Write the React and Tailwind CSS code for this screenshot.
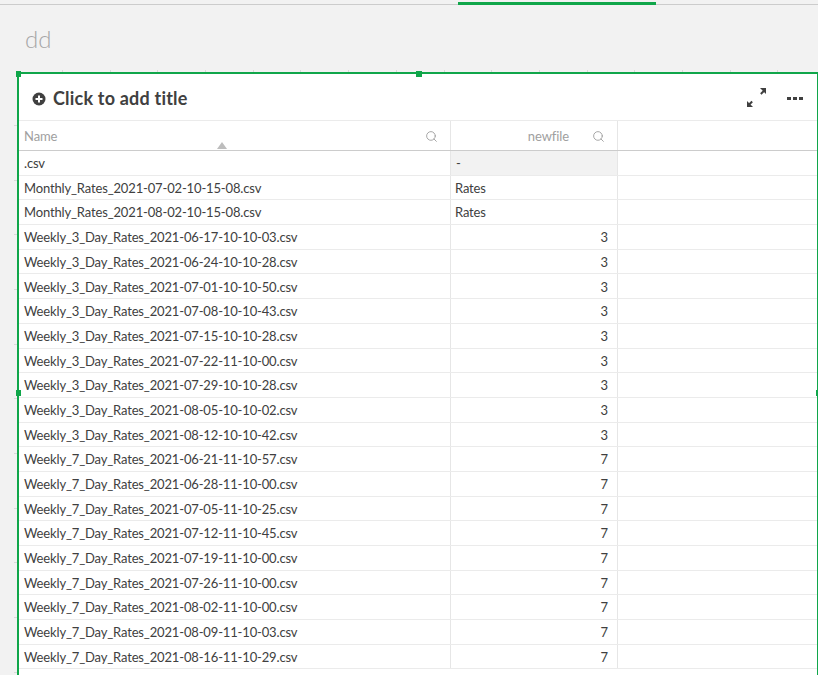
import React from 'react';
import { Search } from 'lucide-react';

const rows = [
  ['.csv', '-', 'dash'],
  ['Monthly_Rates_2021-07-02-10-15-08.csv', 'Rates', 'text'],
  ['Monthly_Rates_2021-08-02-10-15-08.csv', 'Rates', 'text'],
  ['Weekly_3_Day_Rates_2021-06-17-10-10-03.csv', '3', 'num'],
  ['Weekly_3_Day_Rates_2021-06-24-10-10-28.csv', '3', 'num'],
  ['Weekly_3_Day_Rates_2021-07-01-10-10-50.csv', '3', 'num'],
  ['Weekly_3_Day_Rates_2021-07-08-10-10-43.csv', '3', 'num'],
  ['Weekly_3_Day_Rates_2021-07-15-10-10-28.csv', '3', 'num'],
  ['Weekly_3_Day_Rates_2021-07-22-11-10-00.csv', '3', 'num'],
  ['Weekly_3_Day_Rates_2021-07-29-10-10-28.csv', '3', 'num'],
  ['Weekly_3_Day_Rates_2021-08-05-10-10-02.csv', '3', 'num'],
  ['Weekly_3_Day_Rates_2021-08-12-10-10-42.csv', '3', 'num'],
  ['Weekly_7_Day_Rates_2021-06-21-11-10-57.csv', '7', 'num'],
  ['Weekly_7_Day_Rates_2021-06-28-11-10-00.csv', '7', 'num'],
  ['Weekly_7_Day_Rates_2021-07-05-11-10-25.csv', '7', 'num'],
  ['Weekly_7_Day_Rates_2021-07-12-11-10-45.csv', '7', 'num'],
  ['Weekly_7_Day_Rates_2021-07-19-11-10-00.csv', '7', 'num'],
  ['Weekly_7_Day_Rates_2021-07-26-11-10-00.csv', '7', 'num'],
  ['Weekly_7_Day_Rates_2021-08-02-11-10-00.csv', '7', 'num'],
  ['Weekly_7_Day_Rates_2021-08-09-11-10-03.csv', '7', 'num'],
  ['Weekly_7_Day_Rates_2021-08-16-11-10-29.csv', '7', 'num'],
];

const topTicks = Array.from({ length: 17 }, (_, i) => i);
const sideTicks = Array.from({ length: 11 }, (_, i) => i);

function ExpandIcon() {
  return (
    <svg width="20" height="20" viewBox="0 0 20 20" fill="#404040">
      <polygon points="13,0 19,0 19,6" />
      <rect x="14.6" y="1.8" width="2" height="5" transform="rotate(45 15.6 4.3)" />
      <polygon points="0,13 0,19 6,19" />
      <rect x="2.4" y="12.7" width="2" height="5" transform="rotate(45 3.4 15.2)" />
    </svg>
  );
}

function PlusCircle() {
  return (
    <svg width="14" height="14" viewBox="0 0 14 14">
      <circle cx="7" cy="7" r="6.5" fill="#404040" />
      <rect x="3.5" y="6" width="7" height="2" fill="#fff" />
      <rect x="6" y="3.5" width="2" height="7" fill="#fff" />
    </svg>
  );
}

export default function App() {
  return (
    <div className="relative h-[675px] w-[818px] overflow-hidden bg-[#f2f2f2] font-['Lato','Noto_Sans',sans-serif] text-[#404040]">
      {/* top tab strip */}
      <div className="h-[5px] border-b border-[#cccccc] pl-[458px] pt-[2px]">
        <div className="h-[3px] w-[198px] bg-[#10a64a]" />
      </div>

      {/* sheet title */}
      <div className="flex h-[67px] items-center pl-[25px] text-[24px] font-light text-[#a6a6a6]">dd</div>

      {/* canvas grid ticks */}
      <div className="absolute left-[62px] top-[70px] flex">
        {topTicks.map((t) => (
          <div key={t} className="h-[6px] w-[47.7px] border-l border-[#d9d9d9]" />
        ))}
      </div>
      <div className="absolute left-[14px] top-[125px] flex flex-col">
        {sideTicks.map((t) => (
          <div key={t} className="h-[54.67px] w-[4px] border-t border-[#d9d9d9]" />
        ))}
      </div>

      {/* object panel */}
      <div className="relative ml-[17px] h-[610px] border-l-2 border-t-2 border-r border-[#10a64a] bg-white">
        <div className="flex h-[47px] items-center border-b border-[#ebebeb] pl-[13px] pr-[14px] pt-[3px]">
          <PlusCircle />
          <span className="ml-[7px] text-[18px] font-bold tracking-[0.2px] text-[#404040]">Click to add title</span>
          <div className="ml-auto flex items-center gap-[20px] pb-[2px]">
            <ExpandIcon />
            <div className="flex gap-[2px] pt-[1px]">
              <span className="h-[3px] w-[4px] bg-[#404040]" />
              <span className="h-[3px] w-[4px] bg-[#404040]" />
              <span className="h-[3px] w-[4px] bg-[#404040]" />
            </div>
          </div>
        </div>

        {/* header */}
        <div className="flex h-[30px] border-b border-[#cccccc] text-[13px] tracking-[-0.1px] text-[#a0a0a0]">
          <div className="relative flex w-[432px] items-center border-r border-[#e6e6e6] pl-[5px] pr-[12px] pt-[2px]">
            <span>Name</span>
            <Search className="ml-auto" size={13} strokeWidth={1.6} color="#9a9a9a" />
            <div className="absolute bottom-[1px] left-[198px] h-0 w-0 border-x-[5px] border-b-[7px] border-x-transparent border-b-[#bdbdbd]" />
          </div>
          <div className="flex w-[167px] items-center justify-end gap-[23px] border-r border-[#e6e6e6] pr-[12px] pt-[2px]">
            <span>newfile</span>
            <Search size={13} strokeWidth={1.6} color="#9a9a9a" />
          </div>
        </div>

        {/* rows */}
        {rows.map(([name, val, kind]) => (
          <div key={name} className="flex h-[24.7px] border-b border-[#ebebeb] text-[13px] tracking-[-0.15px] text-[#404040]">
            <div className="flex w-[432px] items-center border-r border-[#e6e6e6] pl-[5px] pt-[2px]">{name}</div>
            <div
              className={
                kind === 'dash'
                  ? 'flex w-[167px] items-center border-r border-[#e6e6e6] bg-[#f2f2f2] pl-[5px] pt-[2px]'
                  : kind === 'text'
                  ? 'flex w-[167px] items-center border-r border-[#e6e6e6] pl-[4px] pt-[2px]'
                  : 'flex w-[167px] items-center justify-end border-r border-[#e6e6e6] pr-[9px] pt-[2px]'
              }
            >
              {val}
            </div>
          </div>
        ))}

        {/* selection handles */}
        <div className="absolute left-[-3px] top-[-3px] h-[6px] w-[5px] bg-[#10a64a]" />
        <div className="absolute left-[397px] top-[-3px] h-[6px] w-[6px] bg-[#10a64a]" />
        <div className="absolute left-[-3px] top-[316px] h-[6px] w-[5px] bg-[#10a64a]" />
        <div className="absolute right-[-1px] top-[316px] h-[6px] w-[2px] bg-[#10a64a]" />
      </div>
    </div>
  );
}
